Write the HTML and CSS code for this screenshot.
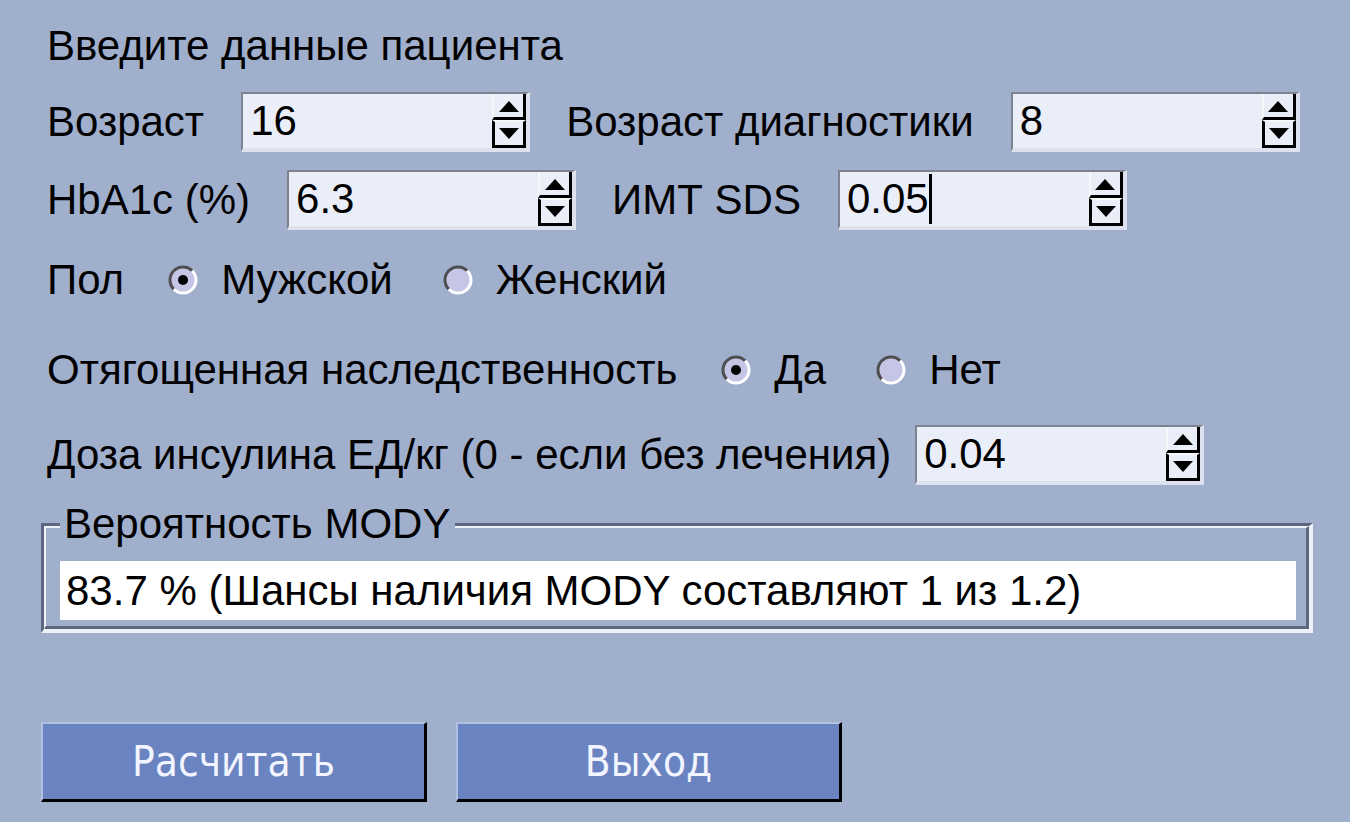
FILE: index.html
```html
<!DOCTYPE html>
<html lang="ru">
<head>
<meta charset="utf-8">
<title>MODY</title>
<link rel="stylesheet" href="styles.css">
</head>
<body>
<div class="app">
  <div class="title">Введите данные пациента</div>

  <div class="row">
    <span class="lbl">Возраст</span>
    <div class="spin"><div class="val">16</div><div class="arrows"><div class="arrow up"><svg width="22" height="12" viewBox="0 0 22 12"><path d="M1 12 L11 1 L21 12 Z" fill="#000"/></svg></div><div class="arrow down"><svg width="22" height="12" viewBox="0 0 22 12"><path d="M1 0 L11 11 L21 0 Z" fill="#000"/></svg></div></div></div>
    <span class="lbl">Возраст диагностики</span>
    <div class="spin"><div class="val">8</div><div class="arrows"><div class="arrow up"><svg width="22" height="12" viewBox="0 0 22 12"><path d="M1 12 L11 1 L21 12 Z" fill="#000"/></svg></div><div class="arrow down"><svg width="22" height="12" viewBox="0 0 22 12"><path d="M1 0 L11 11 L21 0 Z" fill="#000"/></svg></div></div></div>
  </div>

  <div class="row">
    <span class="lbl">HbA1c (%)</span>
    <div class="spin"><div class="val">6.3</div><div class="arrows"><div class="arrow up"><svg width="22" height="12" viewBox="0 0 22 12"><path d="M1 12 L11 1 L21 12 Z" fill="#000"/></svg></div><div class="arrow down"><svg width="22" height="12" viewBox="0 0 22 12"><path d="M1 0 L11 11 L21 0 Z" fill="#000"/></svg></div></div></div>
    <span class="lbl">ИМТ SDS</span>
    <div class="spin"><div class="val">0.05<span class="caret"></span></div><div class="arrows"><div class="arrow up"><svg width="22" height="12" viewBox="0 0 22 12"><path d="M1 12 L11 1 L21 12 Z" fill="#000"/></svg></div><div class="arrow down"><svg width="22" height="12" viewBox="0 0 22 12"><path d="M1 0 L11 11 L21 0 Z" fill="#000"/></svg></div></div></div>
  </div>

  <div class="row radios r3">
    <span class="lbl first">Пол</span>
    <span class="radio"><svg width="30" height="30" viewBox="0 0 30 30"><circle cx="15" cy="15" r="13" fill="#c5c5e6"/><path d="M5.8 24.2 A13 13 0 0 1 24.2 5.8" fill="none" stroke="#4e4e4e" stroke-width="3"/><path d="M24.2 5.8 A13 13 0 0 1 5.8 24.2" fill="none" stroke="#ffffff" stroke-width="3"/><circle cx="15" cy="15" r="5" fill="#000"/></svg></span>
    <span class="opt">Мужской</span>
    <span class="radio"><svg width="30" height="30" viewBox="0 0 30 30"><circle cx="15" cy="15" r="13" fill="#c5c5e6"/><path d="M5.8 24.2 A13 13 0 0 1 24.2 5.8" fill="none" stroke="#4e4e4e" stroke-width="3"/><path d="M24.2 5.8 A13 13 0 0 1 5.8 24.2" fill="none" stroke="#ffffff" stroke-width="3"/></svg></span>
    <span class="opt">Женский</span>
  </div>

  <div class="row radios r4">
    <span class="lbl first">Отягощенная наследственность</span>
    <span class="radio"><svg width="30" height="30" viewBox="0 0 30 30"><circle cx="15" cy="15" r="13" fill="#c5c5e6"/><path d="M5.8 24.2 A13 13 0 0 1 24.2 5.8" fill="none" stroke="#4e4e4e" stroke-width="3"/><path d="M24.2 5.8 A13 13 0 0 1 5.8 24.2" fill="none" stroke="#ffffff" stroke-width="3"/><circle cx="15" cy="15" r="5" fill="#000"/></svg></span>
    <span class="opt">Да</span>
    <span class="radio"><svg width="30" height="30" viewBox="0 0 30 30"><circle cx="15" cy="15" r="13" fill="#c5c5e6"/><path d="M5.8 24.2 A13 13 0 0 1 24.2 5.8" fill="none" stroke="#4e4e4e" stroke-width="3"/><path d="M24.2 5.8 A13 13 0 0 1 5.8 24.2" fill="none" stroke="#ffffff" stroke-width="3"/></svg></span>
    <span class="opt">Нет</span>
  </div>

  <div class="row r5">
    <span class="lbl">Доза инсулина ЕД/кг (0 - если без лечения)</span>
    <div class="spin"><div class="val">0.04</div><div class="arrows"><div class="arrow up"><svg width="22" height="12" viewBox="0 0 22 12"><path d="M1 12 L11 1 L21 12 Z" fill="#000"/></svg></div><div class="arrow down"><svg width="22" height="12" viewBox="0 0 22 12"><path d="M1 0 L11 11 L21 0 Z" fill="#000"/></svg></div></div></div>
  </div>

  <div class="group">
    <span class="legend">Вероятность MODY</span>
    <div class="result">83.7 % (Шансы наличия MODY составляют 1 из 1.2)</div>
  </div>

  <div class="buttons">
    <button class="btn">Расчитать</button>
    <button class="btn">Выход</button>
  </div>
</div>
</body>
</html>
```
FILE: styles.css
```css
html, body {
  margin: 0;
  padding: 0;
  width: 1350px;
  height: 822px;
  overflow: hidden;
  background: #a0afcc;
}

.app {
  padding: 16px 0 0 47px;
  font-family: "Liberation Sans", Arial, sans-serif;
  font-size: 42px;
  color: #000;
}

.title {
  height: 60px;
  line-height: 60px;
}

.row {
  display: flex;
  align-items: center;
  height: 60px;
  margin-top: 16px;
}

.row + .row {
  margin-top: 18px;
}

.row.r3 { margin-top: 20px; }
.row.r4 { margin-top: 30px; }
.row.r5 { margin-top: 25px; }

.lbl {
  margin-right: 37px;
  white-space: nowrap;
}

.r5 .lbl {
  margin-right: 24px;
}

.spin {
  box-sizing: border-box;
  width: 289px;
  height: 60px;
  display: flex;
  flex-shrink: 0;
  background: #eaeef9;
  border-top: 2px solid #7d828e;
  border-left: 2px solid #7d828e;
  border-bottom: 4px solid #dde2ee;
  border-right: 4px solid #dde2ee;
  margin-right: 36px;
}

.val {
  flex: 1;
  padding-left: 7px;
  display: flex;
  align-items: center;
  line-height: 1;
}

.caret {
  display: inline-block;
  width: 3px;
  height: 50px;
  background: #000;
}

.arrows {
  width: 34px;
  flex-shrink: 0;
  display: flex;
  flex-direction: column;
}

.arrow {
  flex: 1;
  box-sizing: border-box;
  display: flex;
  align-items: center;
  justify-content: center;
}

.arrow.up {
  border-left: 2px solid #f6f8fc;
  border-right: 3px solid #000;
  border-bottom: 3px solid #000;
}

.arrow.down {
  border-top: 2px solid #f6f8fc;
  border-left: 3px solid #000;
  border-right: 3px solid #000;
  border-bottom: 3px solid #000;
}

.arrow svg {
  display: block;
  flex-shrink: 0;
}

.radios .lbl.first {
  margin-right: 44px;
}

.radio {
  display: flex;
  width: 30px;
  height: 30px;
  margin-right: 23px;
}

.radio svg { display: block; }

.opt {
  margin-right: 50px;
  white-space: nowrap;
}

.group {
  position: relative;
  box-sizing: border-box;
  width: 1272px;
  margin: 38px 0 0 -6px;
  border-top: 3px solid #5d6781;
  border-left: 3px solid #5d6781;
  border-bottom: 4px solid #eef2f8;
  border-right: 4px solid #eef2f8;
}

.group::before {
  content: "";
  position: absolute;
  inset: 0;
  border-top: 2px solid #eef2f8;
  border-left: 2px solid #eef2f8;
  border-bottom: 3px solid #5d6781;
  border-right: 3px solid #5d6781;
  pointer-events: none;
}

.group .result {
  position: relative;
  margin: 35px 13px 9px 16px;
  height: 59px;
  line-height: 59px;
  background: #ffffff;
  padding-left: 6px;
  white-space: nowrap;
}

.legend {
  position: absolute;
  top: -27px;
  left: 16px;
  padding: 0 5px 0 4px;
  line-height: 49px;
  background: #a0afcc;
  z-index: 1;
}

.buttons {
  display: flex;
  gap: 29px;
  margin: 89px 0 0 -6px;
}

.btn {
  box-sizing: border-box;
  width: 386px;
  height: 80px;
  background: #6a84c1;
  color: #f2f4ff;
  border-top: 2px solid #b2c0e2;
  border-left: 2px solid #b2c0e2;
  border-right: 3px solid #000;
  border-bottom: 3px solid #000;
  font-family: "Liberation Sans Narrow", "DejaVu Sans Condensed", "Liberation Sans", sans-serif;
  font-stretch: condensed;
  font-size: 42px;
  padding: 0;
  cursor: default;
}
```
